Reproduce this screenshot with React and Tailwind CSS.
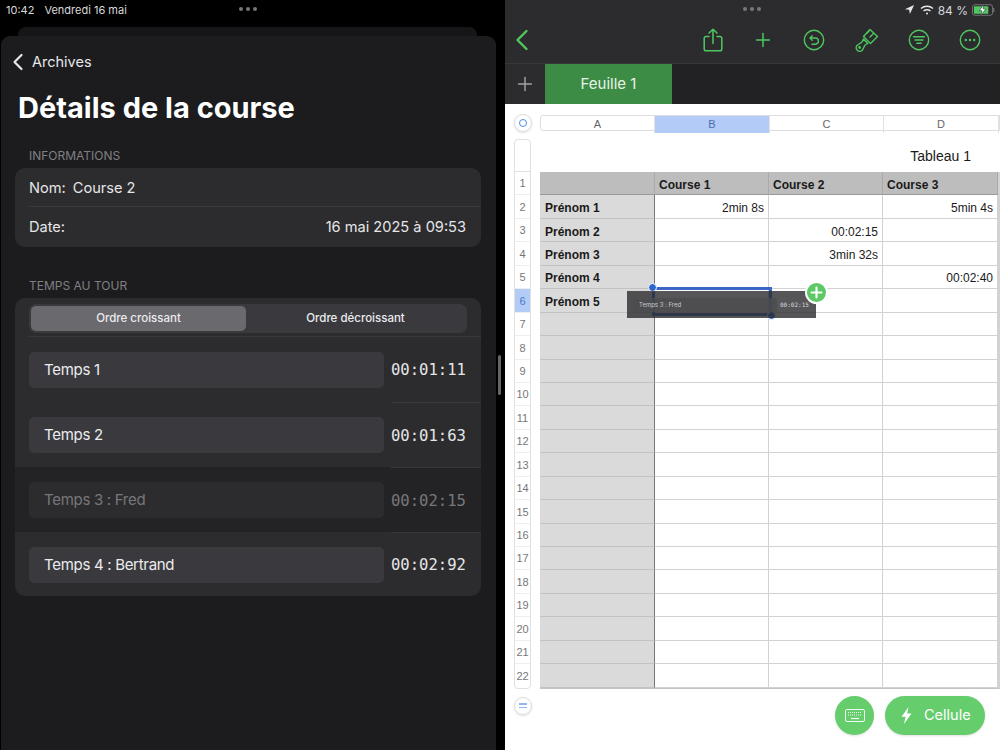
import { Plus } from 'lucide-react';

const sans = "font-['Inter','Noto_Sans',sans-serif]";
const table = "font-['Liberation_Sans',Arial,sans-serif]";

const laps = [
    { label: 'Temps 1', time: '00:01:11' },
    { label: 'Temps 2', time: '00:01:63' },
    { label: 'Temps 3 : Fred', time: '00:02:15', used: true },
    { label: 'Temps 4 : Bertrand', time: '00:02:92' },
];

// table content, one entry per row below the header
const rows = [
    ['Prénom 1', '2min 8s', '', '5min 4s'],
    ['Prénom 2', '', '00:02:15', ''],
    ['Prénom 3', '', '3min 32s', ''],
    ['Prénom 4', '', '', '00:02:40'],
    ['Prénom 5', '', '', ''],
    ...Array.from({ length: 16 }, () => ['', '', '', '']),
];

function Dots() {
    return (
        <div className="flex gap-[3px]">
            <span className="w-[4px] h-[4px] rounded-full bg-[#77777b]"></span>
            <span className="w-[4px] h-[4px] rounded-full bg-[#77777b]"></span>
            <span className="w-[4px] h-[4px] rounded-full bg-[#77777b]"></span>
        </div>
    );
}

function LapRow({ lap, first }) {
    return (
        <div className={`flex h-[65px] last:h-[64px] pl-[14px] ${lap.used ? 'bg-[#232325]' : ''}`}>
            <div className={`w-[355px] h-[36px] mt-[15px] rounded-[5px] flex items-center pl-[15px] text-[15px] tracking-[-0.3px] ${lap.used ? 'bg-[#2c2c2e] text-[#77777a]' : 'bg-[#3a3a3e] text-[#ececee]'}`}>
                {lap.label}
            </div>
            <div className={`ml-[7px] w-[90px] pr-[15px] pt-[3px] flex items-center justify-end font-['DejaVu_Sans_Mono',monospace] text-[15.6px] ${first ? '' : 'border-t border-[#39393c]'} ${lap.used ? 'text-[#77777a]' : 'text-[#e6e6e8]'}`}>
                {lap.time}
            </div>
        </div>
    );
}

function LeftPane() {
    return (
        <div className={`w-[505px] h-full bg-black flex flex-col shrink-0 relative ${sans}`}>
            <div className="h-[27px] flex items-start pt-[2px] pl-[6px] text-[11px] text-[#d8d8da] relative">
                <span>10:42</span>
                <span className="ml-[10px]">Vendredi 16 mai</span>
                <div className="absolute left-[239px] top-[7px]"><Dots /></div>
            </div>
            <div className="h-[9px] ml-[18px] w-[459px] bg-[#161618] rounded-t-[8px]"></div>
            <div className="ml-[1px] w-[495px] flex-1 bg-[#1c1c1e] rounded-t-[9px]">
                <div className="flex items-center h-[50px] pt-[2px] pl-[11px] text-[#e6e6e8] text-[14.5px]">
                    <svg width="12" height="18" viewBox="0 0 12 18" fill="none" stroke="currentColor" strokeWidth="2.2" strokeLinecap="round" strokeLinejoin="round">
                        <path d="M9.5 2 L2.5 9 L9.5 16" />
                    </svg>
                    <span className="ml-[8px]">Archives</span>
                </div>
                <h1 className="pl-[17px] text-[29px] leading-[44px] font-bold text-white">Détails de la course</h1>
                <div className="pl-[28px] mt-[18px] text-[12px] leading-[16px] text-[#808084]">INFORMATIONS</div>
                <div className="mt-[4px] ml-[14px] w-[466px] bg-[#2c2c2e] rounded-[10px] text-[14.6px] text-[#e6e6e8]">
                    <div className="h-[39px] ml-[14px] pt-[4px] flex items-center border-b border-[#39393c]">
                        <span>Nom:</span>
                        <span className="ml-[7px]">Course 2</span>
                    </div>
                    <div className="h-[40px] ml-[14px] pr-[15px] pt-[1px] flex items-center justify-between">
                        <span>Date:</span>
                        <span>16 mai 2025 à 09:53</span>
                    </div>
                </div>
                <div className="pl-[28px] mt-[31px] text-[12px] leading-[16px] text-[#808084]">TEMPS AU TOUR</div>
                <div className="mt-[4px] ml-[14px] w-[466px] bg-[#2c2c2e] rounded-[10px] overflow-hidden">
                    <div className="h-[39px] ml-[14px] pr-[14px] pt-[6px] border-b border-[#39393c]">
                        <div className="h-[29px] w-[438px] rounded-[7px] bg-[#3a3a3e] flex items-center p-[2px] text-[11.5px] font-medium text-[#ececee]">
                            <div className="w-[215px] h-[25px] pt-[1px] rounded-[5px] bg-[#69696e] flex items-center justify-center">Ordre croissant</div>
                            <div className="flex-1 pt-[1px] text-center">Ordre décroissant</div>
                        </div>
                    </div>
                    {laps.map((lap, i) => (
                        <LapRow key={lap.label} lap={lap} first={i === 0} />
                    ))}
                </div>
            </div>
            <div className="absolute left-[498px] top-[355px] w-[3px] h-[40px] rounded-full bg-[#66666a]"></div>
        </div>
    );
}

function Toolbar() {
    return (
        <div className="h-[63px] bg-[#2c2c2e] relative text-[#4fc760]">
            <div className={`h-[27px] flex items-start justify-end pt-[2px] pr-[5px] text-[12px] text-[#d8d8da] ${sans}`}>
                <div className="absolute left-[238px] top-[7px]"><Dots /></div>
                <svg width="11" height="11" viewBox="0 0 12 12" className="mt-[2px]">
                    <path d="M11 1 L1 5.6 L5.6 6.4 L6.4 11 Z" fill="#e8e8ea" />
                </svg>
                <svg width="14" height="12" viewBox="0 0 14 12" className="ml-[5px] mt-[2px]" fill="none" stroke="#e8e8ea" strokeWidth="1.5">
                    <path d="M1 4.5 C4.5 1.5 9.5 1.5 13 4.5" />
                    <path d="M3.5 7 C5.5 5.5 8.5 5.5 10.5 7" />
                    <circle cx="7" cy="9.5" r="1" fill="#e8e8ea" stroke="none" />
                </svg>
                <span className="ml-[4px]">84 %</span>
                <svg width="23" height="12" viewBox="0 0 24 12" className="ml-[4px] mt-[2px]">
                    <rect x="0.5" y="0.5" width="21" height="11" rx="2.5" fill="none" stroke="#77777a" />
                    <rect x="2" y="2" width="15" height="8" rx="1" fill="#4fc760" />
                    <path d="M22.7 4 v4" stroke="#77777a" strokeWidth="1.2" />
                    <path d="M12.5 0 L7.5 6.8 H10.5 L9 12 L14.5 4.8 H11.5 Z" fill="#fff" stroke="#2c2c2e" strokeWidth="0.6" />
                </svg>
            </div>
            <div className="flex items-center h-[36px] -mt-[5px] pl-[10px]">
                <svg width="14" height="22" viewBox="0 0 14 22" fill="none" stroke="currentColor" strokeWidth="2.4" strokeLinecap="round" strokeLinejoin="round">
                    <path d="M11.5 2 L2.5 11 L11.5 20" />
                </svg>
                <div className="ml-auto flex items-center pr-[19px]">
                    <svg width="20" height="24" viewBox="0 0 20 24" fill="none" stroke="currentColor" strokeWidth="1.5" strokeLinecap="round" strokeLinejoin="round" className="mr-[29px]">
                        <path d="M6 8.5 H3 a1.8 1.8 0 0 0 -1.8 1.8 V21 a1.8 1.8 0 0 0 1.8 1.8 H17 a1.8 1.8 0 0 0 1.8 -1.8 V10.3 A1.8 1.8 0 0 0 17 8.5 H14" />
                        <path d="M10 15.5 V1.5 M6 5 L10 1.2 L14 5" />
                    </svg>
                    <Plus size={22} strokeWidth={1.6} className="mr-[29px]" />
                    <svg width="22" height="22" viewBox="0 0 22 22" fill="none" stroke="currentColor" strokeWidth="1.4" strokeLinecap="round" strokeLinejoin="round" className="mr-[30px]">
                        <circle cx="11" cy="11" r="9.7" />
                        <path d="M9.2 6.8 L7 9 L9.2 11.2 M7 9 H12.3 a3 3 0 0 1 0 6.2 H9" />
                    </svg>
                    <svg width="24" height="24" viewBox="0 0 24 24" fill="none" stroke="currentColor" strokeWidth="1.4" strokeLinecap="round" strokeLinejoin="round" className="mr-[29px]">
                        <path d="M15 1.5 L22.5 8.5 L15.5 15.5 L8.5 8.5 Z" />
                        <path d="M12 5 L14 3 M15 9 L18.5 5.5" />
                        <path d="M8.5 11 L12.8 15.5 L10 17 L7.5 22 A1.9 1.9 0 0 1 2 17.5 L7 14 Z" />
                        <circle cx="4.6" cy="19.5" r="0.7" />
                    </svg>
                    <svg width="22" height="22" viewBox="0 0 22 22" fill="none" stroke="currentColor" strokeWidth="1.4" strokeLinecap="round" className="mr-[29px]">
                        <circle cx="11" cy="11" r="9.7" />
                        <path d="M5.5 7.7 H16.5 M7 11 H15 M8.8 14.3 H13.2" />
                    </svg>
                    <svg width="22" height="22" viewBox="0 0 22 22" fill="none" stroke="currentColor" strokeWidth="1.4">
                        <circle cx="11" cy="11" r="9.7" />
                        <circle cx="6.8" cy="11" r="1.2" fill="currentColor" stroke="none" />
                        <circle cx="11" cy="11" r="1.2" fill="currentColor" stroke="none" />
                        <circle cx="15.2" cy="11" r="1.2" fill="currentColor" stroke="none" />
                    </svg>
                </div>
            </div>
        </div>
    );
}

function Cell({ children, col, header, first }) {
    let cls = 'border-r border-b border-[#d2d2d2] flex items-center pt-[3px] text-[12px] text-[#1a1a1a] ';
    if (header) {
        cls += 'bg-[#bdbdbd] border-b-[#999] pl-[4px] font-bold border-r-[#aaa] ';
    } else if (first) {
        cls += 'bg-[#dadada] pl-[5px] font-bold border-b-[#c2c2c2] ';
    } else {
        cls += 'justify-end pr-[4px] ';
    }
    if (col === 0) cls += 'border-r-[#777] ';
    return <div className={cls}>{children}</div>;
}

function DragPreview() {
    return (
        <div className="absolute left-[122px] top-[179px] w-[195px] h-[37px]">
            {/* selection under the dragged row */}
            <div className="absolute left-[25px] top-[4px] w-[120px] h-[29px] border-[3px] border-[#3a66c4]"></div>
            <div className="absolute left-[21px] top-0 w-[9px] h-[9px] rounded-full bg-[#2f66cc] border border-white"></div>
            <div className="absolute left-[140px] top-[28px] w-[9px] h-[9px] rounded-full bg-[#2f66cc] border border-white"></div>
            <div className="absolute left-0 top-[8px] w-[189px] h-[27px] bg-[#2c2c2e]/80 flex items-center pl-[6px] text-[6px]">
                <div className={`w-[144px] h-[14px] rounded-[2px] bg-[#4c4c50]/80 flex items-center pl-[6px] text-[#c8c8ca] ${sans}`}>Temps 3 : Fred</div>
                <div className="ml-[3px] font-['DejaVu_Sans_Mono',monospace] text-[#d8d8da]">00:02:15</div>
            </div>
            <div className="absolute left-[178px] top-[-2px] w-[23px] h-[23px] rounded-full bg-[#5cc866] border-2 border-white flex items-center justify-center text-white">
                <Plus size={17} strokeWidth={3} />
            </div>
        </div>
    );
}

function Sheet() {
    const cols = ['A', 'B', 'C', 'D'];
    return (
        <div className={`flex-1 bg-white relative pl-[9px] pt-[10px] ${table}`}>
            <div className="flex items-center h-[18px]">
                <div className="w-[18px] h-[18px] rounded-full border border-[#dcdcdc] flex items-center justify-center shadow-sm">
                    <span className="w-[8px] h-[8px] rounded-full border-[1.5px] border-[#4d8fe8]"></span>
                </div>
                <div className="ml-[8px] flex-1 h-[16px] grid grid-cols-[114px_115px_114px_1fr] border border-[#dedede] rounded-l-[3px] text-[11px] text-[#666]">
                    {cols.map((c) => (
                        <div key={c} className={`flex items-center justify-center border-r border-[#e2e2e2] ${c === 'B' ? 'bg-[#b3ccf7] text-[#4a6ea8]' : ''}`}>{c}</div>
                    ))}
                </div>
            </div>
            <div className="flex mt-[7px]">
                <div className="w-[17px] border border-[#e0e0e0] rounded-[4px] text-[11px] text-[#777] text-center">
                    <div className="h-[32px] border-b border-[#e0e0e0]"></div>
                    {Array.from({ length: 22 }, (_, i) => (
                        <div key={i} className={`h-[23.45px] pt-[1px] flex items-center justify-center border-b border-[#eee] last:border-b-0 ${i === 5 ? 'bg-[#b3ccf7] text-[#4a78c8]' : ''}`}>{i + 1}</div>
                    ))}
                </div>
                <div className="ml-[9px] flex-1">
                    <div className="h-[33px] pr-[29px] pt-[2px] flex items-center justify-end text-[14px] text-[#1a1a1a]">Tableau 1</div>
                    <div className="grid grid-cols-[115px_114px_114px_115px] auto-rows-[23.45px] w-[460px] border-b border-[#c4c4c4] border-r-2 border-r-[#d2d2d2]">
                        <Cell header col={0}></Cell>
                        <Cell header>Course 1</Cell>
                        <Cell header>Course 2</Cell>
                        <Cell header>Course 3</Cell>
                        {rows.map((row, r) => row.map((v, c) => (
                            <Cell key={`${r}-${c}`} col={c} first={c === 0}>{v}</Cell>
                        )))}
                    </div>
                </div>
            </div>
            <div className="flex items-start mt-[7px]">
                <div className="mt-[1px] w-[18px] h-[18px] rounded-full border border-[#dcdcdc] shadow-sm flex flex-col items-center justify-center gap-[2px]">
                    <span className="w-[8px] h-[1.5px] bg-[#8fb6ee]"></span>
                    <span className="w-[8px] h-[1.5px] bg-[#8fb6ee]"></span>
                </div>
                <div className="ml-auto mr-[15px] flex items-center gap-[11px]">
                    <div className="w-[39px] h-[39px] rounded-full bg-[#66cd6d] shadow flex items-center justify-center">
                        <svg width="20" height="13" viewBox="0 0 20 13" fill="none" stroke="#fff" strokeWidth="0.9">
                            <rect x="0.5" y="0.5" width="19" height="12" rx="1.5" />
                            <path d="M3 3.5 H17 M3 6 H17" strokeDasharray="1 1" />
                            <path d="M6 9.5 H14" strokeWidth="1.2" />
                        </svg>
                    </div>
                    <div className={`w-[100px] h-[39px] rounded-full bg-[#66cd6d] shadow flex items-center pl-[16px] text-white text-[14.5px] ${sans}`}>
                        <svg width="11" height="17" viewBox="0 0 11 17">
                            <path d="M7.5 0 L0.5 9.8 H4.6 L3 17 L10.5 6.6 H6.2 Z" fill="#fff" />
                        </svg>
                        <span className="ml-[12px]">Cellule</span>
                    </div>
                </div>
            </div>
            <DragPreview />
        </div>
    );
}

export default function App() {
    return (
        <div className="w-[1000px] h-[750px] flex overflow-hidden bg-black">
            <LeftPane />
            <div className="flex-1 flex flex-col">
                <Toolbar />
                <div className={`h-[41px] bg-[#222224] border-t border-[#38383a] flex text-[15px] text-[#e8f3e8] ${sans}`}>
                    <div className="w-[40px] flex items-center justify-center text-[#a2a2a6] bg-[#2c2c2e]">
                        <Plus size={22} strokeWidth={1.6} />
                    </div>
                    <div className="w-[127px] bg-[#3d8c45] flex items-center justify-center">Feuille 1</div>
                </div>
                <Sheet />
            </div>
        </div>
    );
}
